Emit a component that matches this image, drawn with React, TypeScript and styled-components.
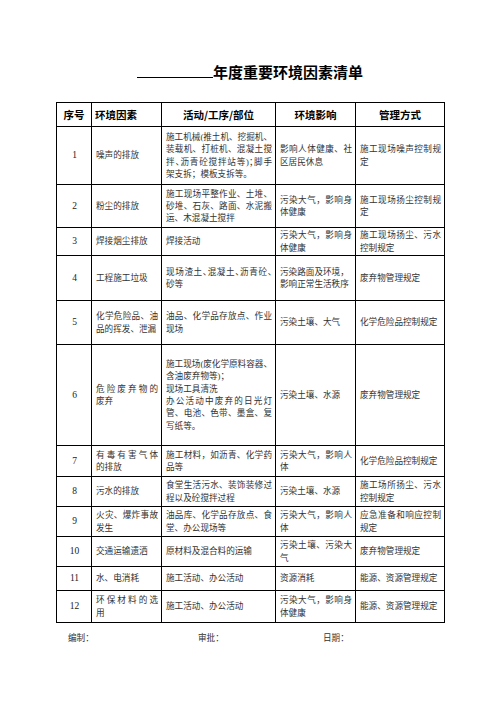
import styled, { createGlobalStyle } from "styled-components";

const GlobalStyle = createGlobalStyle`
    html, body {
        margin: 0;
        padding: 0;
        background: #fff;
    }

    body {
        width: 496px;
        min-height: 702px;
        font-family: "Liberation Serif", "Noto Sans CJK SC", serif;
    }
`;

const Sheet = styled.div`
    width: 388px;
    margin-left: 56px;
    padding-top: 62px;
`;

const Title = styled.h1`
    margin: 0;
    height: 20px;
    text-align: center;
    font: 700 15px/20px "Noto Sans CJK SC", sans-serif;
    color: #000;
`;

const Blank = styled.span`
    display: inline-block;
    width: 76px;
    border-bottom: 1px solid #000;
`;

const Grid = styled.table`
    width: 388px;
    margin-top: 20px;
    border-collapse: collapse;
    table-layout: fixed;
    font-size: 8.6px;
    color: #333;
`;

const Row = styled.tr<{ $h: number }>`
    height: ${({ $h }) => $h}px;
`;

const Head = styled.th<{ $left?: boolean }>`
    border: 1px solid #000;
    padding: 0 3px;
    font: 700 10.5px/14px "Noto Sans CJK SC", sans-serif;
    text-align: ${({ $left }) => ($left ? "left" : "center")};
    color: #000;
`;

const Cell = styled.td<{ $center?: boolean }>`
    border: 1px solid #000;
    padding: 0 3px 0 4px;
    vertical-align: middle;
    text-align: ${({ $center }) => ($center ? "center" : "left")};
    line-height: 12.3px;
`;

const Num = styled.span`
    font-size: 9.5px;
    color: #222;
`;

const Line = styled.span<{ $fill?: boolean; $tight?: boolean }>`
    display: block;
    min-width: 100%;
    width: max-content;
    text-align: left;
    text-align-last: ${({ $fill }) => ($fill ? "justify" : "auto")};
    font-feature-settings: ${({ $tight }) => ($tight ? '"halt"' : "normal")};
`;

const Sign = styled.div`
    display: grid;
    grid-template-columns: 130px 125px 1fr;
    padding-left: 12px;
    margin-top: 9px;
    font-size: 8.6px;
    line-height: 12px;
    color: #333;
`;

type Ln = string | { t: string; keep?: boolean; tight?: boolean };

interface Item {
    h: number;
    factor: Ln[];
    act: Ln[];
    impact: Ln[];
    way: Ln[];
}

const items: Item[] = [
    {
        h: 58,
        factor: ["噪声的排放"],
        act: ["施工机械(推土机、挖掘机、", "装载机、打桩机、混凝土搅", { t: "拌、沥青砼搅拌站等)；脚手", tight: true }, "架支拆；模板支拆等。"],
        impact: ["影响人体健康、社", "区居民休息"],
        way: ["施工现场噪声控制规", "定"],
    },
    {
        h: 43,
        factor: ["粉尘的排放"],
        act: ["施工现场平整作业、土堆、", "砂堆、石灰、路面、水泥搬", "运、木混凝土搅拌"],
        impact: ["污染大气，影响身", "体健康"],
        way: ["施工现场扬尘控制规", "定"],
    },
    {
        h: 28,
        factor: ["焊接烟尘排放"],
        act: ["焊接活动"],
        impact: ["污染大气，影响身", "体健康"],
        way: ["施工现场扬尘、污水", "控制规定"],
    },
    {
        h: 45,
        factor: ["工程施工垃圾"],
        act: [{ t: "现场渣土、混凝土、沥青砼、", tight: true }, "砂等"],
        impact: [{ t: "污染路面及环境，", keep: true }, "影响正常生活秩序"],
        way: ["废弃物管理规定"],
    },
    {
        h: 44,
        factor: ["化学危险品、油", "品的挥发、泄漏"],
        act: ["油品、化学品存放点、作业", "现场"],
        impact: ["污染土壤、大气"],
        way: ["化学危险品控制规定"],
    },
    {
        h: 101,
        factor: ["危险废弃物的", "废弃"],
        act: [
            "施工现场(废化学原料容器、",
            { t: "含油废弃物等)；", keep: true },
            { t: "现场工具清洗", keep: true },
            "办公活动中废弃的日光灯",
            "管、电池、色带、墨盒、复",
            "写纸等。",
        ],
        impact: ["污染土壤、水源"],
        way: ["废弃物管理规定"],
    },
    {
        h: 31,
        factor: ["有毒有害气体", "的排放"],
        act: ["施工材料，如沥青、化学药", "品等"],
        impact: ["污染大气，影响人", "体"],
        way: ["化学危险品控制规定"],
    },
    {
        h: 30,
        factor: ["污水的排放"],
        act: ["食堂生活污水、装饰装修过", "程以及砼搅拌过程"],
        impact: ["污染土壤、水源"],
        way: ["施工场所扬尘、污水", "控制规定"],
    },
    {
        h: 30,
        factor: ["火灾、爆炸事故", "发生"],
        act: ["油品库、化学品存放点、食", "堂、办公现场等"],
        impact: ["污染大气，影响人", "体"],
        way: ["应急准备和响应控制", "规定"],
    },
    {
        h: 30,
        factor: ["交通运输遗洒"],
        act: ["原材料及混合料的运输"],
        impact: ["污染土壤、污染大", "气"],
        way: ["废弃物管理规定"],
    },
    {
        h: 24,
        factor: ["水、电消耗"],
        act: ["施工活动、办公活动"],
        impact: ["资源消耗"],
        way: ["能源、资源管理规定"],
    },
    {
        h: 32,
        factor: ["环保材料的选", "用"],
        act: ["施工活动、办公活动"],
        impact: ["污染大气，影响身", "体健康"],
        way: ["能源、资源管理规定"],
    },
];

const Lines = ({ lines }: { lines: Ln[] }) => (
    <>
        {lines.map((l, i) => {
            const line = typeof l === "string" ? { t: l } : l;
            const last = i === lines.length - 1;
            return (
                <Line key={i} $fill={!last && !line.keep} $tight={line.tight}>
                    {line.t}
                </Line>
            );
        })}
    </>
);

const App = () => {
    return (
        <>
            <GlobalStyle />
            <Sheet>
                <Title>
                    <Blank />年度重要环境因素清单
                </Title>

                <Grid>
                    <colgroup>
                        <col style={{ width: 35 }} />
                        <col style={{ width: 70 }} />
                        <col style={{ width: 114 }} />
                        <col style={{ width: 80 }} />
                        <col style={{ width: 89 }} />
                    </colgroup>
                    <thead>
                        <Row $h={24}>
                            <Head>序号</Head>
                            <Head $left>环境因素</Head>
                            <Head>活动/工序/部位</Head>
                            <Head>环境影响</Head>
                            <Head>管理方式</Head>
                        </Row>
                    </thead>
                    <tbody>
                        {items.map((item, i) => (
                            <Row key={i} $h={item.h}>
                                <Cell $center><Num>{i + 1}</Num></Cell>
                                <Cell><Lines lines={item.factor} /></Cell>
                                <Cell><Lines lines={item.act} /></Cell>
                                <Cell><Lines lines={item.impact} /></Cell>
                                <Cell><Lines lines={item.way} /></Cell>
                            </Row>
                        ))}
                    </tbody>
                </Grid>

                <Sign>
                    <span>编制：</span>
                    <span>审批：</span>
                    <span>日期：</span>
                </Sign>
            </Sheet>
        </>
    );
};

export default App;
